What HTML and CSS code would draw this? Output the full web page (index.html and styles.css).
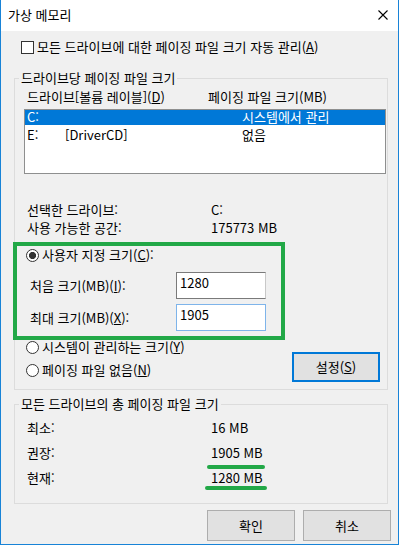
FILE: index.html
```html
<!DOCTYPE html>
<html lang="ko">
<head>
<meta charset="utf-8">
<title>가상 메모리</title>
<link rel="stylesheet" href="styles.css">
</head>
<body>
<div class="window">
  <div class="titlebar">
    <span class="title">가상 메모리</span>
    <svg class="close" width="10" height="10" viewBox="0 0 10 10"><path d="M0.5 0.5L9.5 9.5M9.5 0.5L0.5 9.5" stroke="#000" stroke-width="1.1" fill="none"/></svg>
  </div>
  <div class="content">
    <div class="check-row"><span class="checkbox"></span>모든 드라이브에 대한 페이징 파일 크기 자동 관리(<u>A</u>)</div>

    <fieldset class="group group-drive">
      <legend>드라이브당 페이징 파일 크기</legend>
      <div class="list-head"><span class="col-drive">드라이브[볼륨 레이블](<u>D</u>)</span><span>페이징 파일 크기(MB)</span></div>
      <div class="listbox">
        <div class="list-row selected"><span>C:</span><span></span><span>시스템에서 관리</span></div>
        <div class="list-row"><span>E:</span><span>[DriverCD]</span><span>없음</span></div>
      </div>
      <div class="info-row info-first"><span class="info-label">선택한 드라이브:</span><span>C:</span></div>
      <div class="info-row info-next"><span class="info-label">사용 가능한 공간:</span><span>175773 MB</span></div>

      <div class="highlight">
        <div class="radio-row"><span class="radio checked"></span>사용자 지정 크기(<u>C</u>):</div>
        <div class="size-row"><span class="size-label">처음 크기(MB)(<u>I</u>):</span><input class="size-input" type="text" value="1280"></div>
        <div class="size-row size-next"><span class="size-label">최대 크기(MB)(<u>X</u>):</span><input class="size-input focused" type="text" value="1905"></div>
      </div>

      <div class="options">
        <div class="radio-col">
          <div class="radio-row"><span class="radio"></span>시스템이 관리하는 크기(<u>Y</u>)</div>
          <div class="radio-row radio-next"><span class="radio"></span>페이징 파일 없음(<u>N</u>)</div>
        </div>
        <button class="btn btn-default">설정(<u>S</u>)</button>
      </div>
    </fieldset>

    <fieldset class="group group-total">
      <legend>모든 드라이브의 총 페이징 파일 크기</legend>
      <div class="stat-row stat-first"><span class="info-label">최소:</span><span class="value">16 MB</span></div>
      <div class="stat-row"><span class="info-label">권장:</span><span class="value mark mark-a">1905 MB</span></div>
      <div class="stat-row"><span class="info-label">현재:</span><span class="value mark mark-b">1280 MB</span></div>
    </fieldset>

    <div class="actions">
      <button class="btn">확인</button>
      <button class="btn">취소</button>
    </div>
  </div>
</div>
</body>
</html>
```

FILE: styles.css
```css
html, body {
  margin: 0;
  padding: 0;
  background: #ffffff;
}

body {
  font-family: "Noto Sans CJK KR", "Noto Sans", sans-serif;
  font-size: 13px;
  line-height: 16px;
  color: #000000;
}

u {
  text-decoration: underline;
  text-underline-offset: 1px;
}

.window {
  width: 399px;
  height: 545px;
  box-sizing: border-box;
  border: 1px solid #1883d7;
  border-top: 0;
  background: #f0f0f0;
  display: flex;
  flex-direction: column;
}

.titlebar {
  height: 31px;
  flex: none;
  box-sizing: border-box;
  background: #ffffff;
  display: flex;
  align-items: center;
  padding: 0 10px 2px 7px;
}

.title {
  line-height: 16px;
}

.close {
  margin-left: auto;
  display: block;
}

.content {
  flex: 1;
  display: flex;
  flex-direction: column;
  align-items: flex-start;
}

.check-row {
  display: flex;
  align-items: center;
  height: 16px;
  margin: 8px 0 0 20px;
}

.checkbox {
  width: 13px;
  height: 13px;
  box-sizing: border-box;
  border: 1px solid #333333;
  background: #ffffff;
  margin-right: 3px;
  flex: none;
}

.group {
  margin: 15px 0 0 13px;
  width: 374px;
  box-sizing: border-box;
  border: 1px solid #dcdcdc;
  padding: 0;
  min-width: 0;
}

.group legend {
  margin-left: 4px;
  padding: 0 2px;
  line-height: 16px;
}

.group-drive {
  padding-bottom: 7px;
}

.group-total {
  margin-top: 6px;
  padding-bottom: 17px;
}

.list-head {
  display: flex;
  height: 16px;
  margin: 3px 0 0 12px;
}

.col-drive {
  width: 181px;
  flex: none;
}

.listbox {
  margin: 4px 0 0 9px;
  width: 362px;
  height: 65px;
  box-sizing: border-box;
  border: 1px solid #8e8f8f;
  background: #ffffff;
}

.list-row {
  display: grid;
  grid-template-columns: 38px 177px auto;
  align-items: start;
  height: 18px;
  line-height: 14px;
  padding-left: 2px;
}

.list-row.selected {
  background: linear-gradient(#0078d7, #0078d7) 0 0 / 100% 15px no-repeat;
  color: #ffffff;
}

.info-row,
.stat-row {
  display: flex;
  height: 16px;
  margin-left: 12px;
}

.info-label {
  width: 184px;
  flex: none;
}

.info-first {
  margin-top: 28px;
}

.info-next {
  margin-top: 2px;
}

.highlight {
  margin: 6px 0 0 -2px;
  width: 272px;
  box-sizing: border-box;
  border: 4px solid #22a847;
  padding: 1px 0 5px;
}

.radio-row {
  display: flex;
  align-items: center;
  height: 16px;
}

.highlight .radio-row {
  padding-left: 9px;
}

.radio {
  width: 13px;
  height: 13px;
  box-sizing: border-box;
  border: 1px solid #333333;
  border-radius: 50%;
  background: #ffffff;
  margin-right: 3px;
  flex: none;
}

.radio.checked {
  background: radial-gradient(circle, #333333 0, #333333 3.2px, #ffffff 3.9px);
}

.size-row {
  display: flex;
  align-items: center;
  height: 27px;
  margin-top: 9px;
  padding-left: 13px;
}

.size-next {
  margin-top: 5px;
}

.size-label {
  width: 146px;
  flex: none;
}

.size-input {
  width: 90px;
  height: 27px;
  box-sizing: border-box;
  margin: 0;
  border: 1px solid #7a7a7a;
  border-right-color: #c8c8c8;
  padding: 1px 3px 8px;
  font: inherit;
  line-height: 16px;
  color: #000000;
  background: #ffffff;
  outline: none;
}

.size-input.focused {
  border-color: #7eb4ea;
}

.options {
  display: flex;
  align-items: flex-start;
  margin-top: -1px;
}

.radio-col {
  padding-left: 11px;
}

.radio-next {
  margin-top: 7px;
}

.btn {
  width: 88px;
  height: 30px;
  box-sizing: border-box;
  margin: 0;
  padding: 0;
  border: 1px solid #adadad;
  background: #e1e1e1;
  font: inherit;
  line-height: 16px;
  color: #000000;
}

.btn-default {
  margin: 13px 7px 0 auto;
  border: 2px solid #0078d7;
}

.stat-first {
  margin-top: 8px;
}

.stat-row + .stat-row {
  margin-top: 9px;
}

.value {
  display: inline-block;
  height: 16px;
}

.mark {
  position: relative;
}

.mark::after {
  content: "";
  position: absolute;
  height: 4px;
  border-radius: 2px;
  background: #22a847;
}

.mark-a::after {
  left: -4px;
  width: 58px;
  top: 20px;
}

.mark-b::after {
  left: -6px;
  width: 62px;
  top: 16px;
}

.actions {
  display: flex;
  gap: 8px;
  align-self: flex-end;
  margin: 6px 7px 0 0;
}

.actions .btn {
  height: 31px;
}
```
